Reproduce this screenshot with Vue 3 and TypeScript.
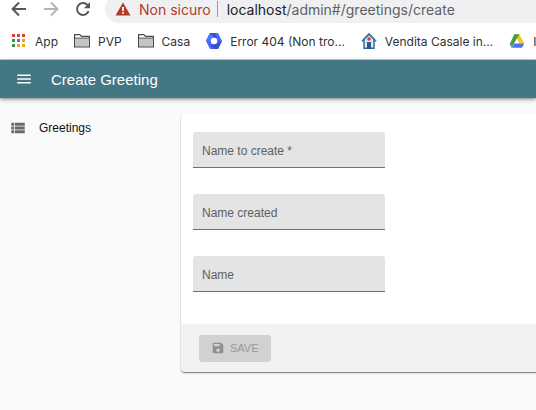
<script setup lang="ts">
import { reactive } from 'vue'

interface Field {
  id: string
  label: string
}

const fields: Field[] = [
  { id: 'nameToCreate', label: 'Name to create *' },
  { id: 'nameCreated', label: 'Name created' },
  { id: 'name', label: 'Name' },
]

const values = reactive<Record<string, string>>({ nameToCreate: '', nameCreated: '', name: '' })

interface Dot {
  x: number
  y: number
  fill: string
}

const dots: Dot[] = ['#d9452f', '#d9452f', '#d9452f', '#3f9150', '#4a6ef0', '#e3a51f', '#3f9150', '#e8ac1d', '#e8ac1d'].map(
  (fill, i) => ({ x: (i % 3) * 5, y: Math.floor(i / 3) * 5 + 1, fill }),
)

interface Bookmark {
  icon: 'apps' | 'folder' | 'hexagon' | 'house' | 'drive'
  title: string
}

const bookmarks: Bookmark[] = [
  { icon: 'apps', title: 'App' },
  { icon: 'folder', title: 'PVP' },
  { icon: 'folder', title: 'Casa' },
  { icon: 'hexagon', title: 'Error 404 (Non tro...' },
  { icon: 'house', title: 'Vendita Casale in...' },
  { icon: 'drive', title: 'I' },
]
</script>

<template>
  <div class="page">
    <div class="toolbar">
      <button class="nav" type="button" aria-label="Back">
        <svg width="16" height="16" viewBox="0 0 16 16" fill="none" stroke="#54575b" stroke-width="2"><path d="M15 8H2M8 1.5 1.6 8 8 14.5" /></svg>
      </button>
      <button class="nav" type="button" aria-label="Forward">
        <svg width="16" height="16" viewBox="0 0 16 16" fill="none" stroke="#b4b5b7" stroke-width="2"><path d="M1 8h13M8 1.5 14.4 8 8 14.5" /></svg>
      </button>
      <button class="nav" type="button" aria-label="Reload">
        <svg width="16" height="16" viewBox="0 0 16 16"><path d="M13.6 10.2A6 6 0 1 1 12.4 3.9L14 5.6" fill="none" stroke="#54575b" stroke-width="2" /><path d="M15 1v6.2H8.8z" fill="#54575b" /></svg>
      </button>
      <div class="address">
        <svg width="16" height="14" viewBox="0 0 16 14"><path d="M8 .5 15.5 13.5H.5z" fill="#b23a27" /><path d="M7.1 5h1.8v4H7.1zM7.1 10h1.8v1.8H7.1z" fill="#fff" /></svg>
        <span class="warning">Non sicuro</span>
        <span class="divider"></span>
        <span class="url"><b>localhost</b>/admin#/greetings/create</span>
      </div>
    </div>

    <nav class="bookmarks">
      <a v-for="b in bookmarks" :key="b.title" href="#" class="bookmark">
        <svg v-if="b.icon === 'apps'" width="15" height="16" viewBox="0 0 15 16">
          <rect v-for="(d, i) in dots" :key="i" :x="d.x" :y="d.y" width="3" height="3" :fill="d.fill" />
        </svg>
        <svg v-else-if="b.icon === 'folder'" width="16" height="16" viewBox="0 0 16 16">
          <path d="M.6 13.9V1.6h5.2l1.8 1.8h7.8v10.5z" fill="#fff" stroke="#4a4a4a" stroke-width="1.2" />
          <path d="M1.2 5.5h13.6v7.8H1.2z" fill="#c4c4c4" />
          <path d="M1 5.1h14" stroke="#4a4a4a" />
        </svg>
        <svg v-else-if="b.icon === 'hexagon'" width="16" height="16" viewBox="0 0 16 16">
          <path d="M4 0h8l4 8-4 8H4L0 8z" fill="#466af5" />
          <path d="M4 0h4l3 4.2L8 5 5 8H0zM16 8l-4 8H7l-2-4 5-1z" fill="#3450cf" />
          <path d="M4 0 0 8h4.8L8 4.4z" fill="#5277fa" />
          <circle cx="8" cy="8" r="3.2" fill="#fff" />
        </svg>
        <svg v-else-if="b.icon === 'house'" width="16" height="16" viewBox="0 0 16 16">
          <path d="M3 6v9.3h10V6L8 1.5z" fill="#dcebf5" stroke="#376493" stroke-width="1.4" />
          <path d="M1 8.3 8 1l7 7.3" fill="none" stroke="#4779a8" stroke-width="1.8" />
          <circle cx="8" cy="6" r="1.8" fill="#d93a30" />
          <path d="M5.8 9h4.4v1H10v6H6v-6h-.2z" fill="#28598c" />
        </svg>
        <svg v-else width="16" height="16" viewBox="0 0 16 16">
          <path d="M5.3 1.3h5l5 9.1h-5z" fill="#f5c52c" />
          <path d="M.7 11 5.3 1.3h5L2.7 14.7z" fill="#42a04b" />
          <path d="M7.9 6.1 10.4 10.4h-5z" fill="#fff" />
          <path d="M5.3 10.4h10l-2.4 4.3H2.8z" fill="#4c70ef" />
        </svg>
        <span>{{ b.title }}</span>
      </a>
    </nav>

    <header class="appbar">
      <button class="menu" type="button" aria-label="Menu">
        <svg width="18" height="18" viewBox="0 0 24 24" fill="#fff"><path d="M3 18h18v-2H3v2zm0-5h18v-2H3v2zm0-7v2h18V6H3z" /></svg>
      </button>
      <h1>Create Greeting</h1>
    </header>

    <div class="content">
      <aside>
        <a href="#" class="menu-item">
          <svg width="18" height="18" viewBox="0 0 24 24" fill="#696969"><path d="M3 14h4v-4H3v4zm0 5h4v-4H3v4zM3 9h4V5H3v4zm5 5h13v-4H8v4zm0 5h13v-4H8v4zM8 5v4h13V5H8z" /></svg>
          <span>Greetings</span>
        </a>
      </aside>
      <form class="card" @submit.prevent>
        <div class="fields">
          <div v-for="f in fields" :key="f.id" class="field">
            <label v-show="!values[f.id]" :for="f.id">{{ f.label }}</label>
            <input :id="f.id" v-model="values[f.id]" type="text" />
          </div>
        </div>
        <footer>
          <button class="save" type="submit" disabled>
            <svg width="14" height="14" viewBox="0 0 24 24" fill="#8f8f8f"><path d="M17 3H5c-1.11 0-2 .9-2 2v14c0 1.1.89 2 2 2h14c1.1 0 2-.9 2-2V7l-4-4zm-5 16c-1.66 0-3-1.34-3-3s1.34-3 3-3 3 1.34 3 3-1.34 3-3 3zm3-10H5V5h10v4z" /></svg>
            <span>SAVE</span>
          </button>
        </footer>
      </form>
    </div>
  </div>
</template>

<style>
body {
  background: #fafafa;
  overflow: hidden;
}
</style>

<style scoped>
.page {
  display: flow-root;
  overflow: hidden;
  font-family: "Liberation Sans", Arial, sans-serif;
  font-size: 12px;
}
button {
  border: 0;
  padding: 0;
  background: none;
  font: inherit;
}
svg {
  display: block;
  flex: none;
}
a {
  color: inherit;
  text-decoration: none;
}
.toolbar {
  display: flex;
  align-items: center;
  gap: 16px;
  height: 28px;
  margin-top: -5px;
  padding-left: 11px;
  background: #fff;
}
.address {
  display: flex;
  flex: 1;
  align-items: center;
  gap: 8px;
  height: 28px;
  margin-left: -2px;
  padding-left: 10px;
  border-radius: 14px 0 0 14px;
  background: #eff0f2;
  font-family: Inter, sans-serif;
  font-size: 14px;
  white-space: nowrap;
}
.warning {
  color: #b23a27;
}
.divider {
  width: 1px;
  height: 16px;
  margin: 0 1px 0 -2px;
  background: #999;
}
.url {
  color: #5f6064;
}
.url b {
  color: #202124;
  font-weight: 400;
}
.bookmarks {
  display: flex;
  align-items: center;
  gap: 16px;
  height: 36px;
  padding-left: 12px;
  border-bottom: 1px solid #d5d7d7;
  background: #fff;
  color: #303236;
  font-family: Inter, sans-serif;
  white-space: nowrap;
}
.bookmark {
  display: flex;
  align-items: center;
  gap: 8px;
}
.appbar {
  position: relative;
  display: flex;
  align-items: center;
  gap: 18px;
  height: 38px;
  padding-left: 15px;
  background: #437783;
  color: #fff;
  box-shadow: 0 1px 3px rgba(0, 0, 0, 0.4), 0 2px 6px rgba(0, 0, 0, 0.14);
}
h1 {
  margin: 0;
  font-size: 15px;
  font-weight: 400;
}
.content {
  display: flex;
  padding: 16px 0;
}
aside {
  width: 181px;
  flex: none;
}
.menu-item {
  display: flex;
  align-items: center;
  gap: 12px;
  padding: 5px 9px;
  color: #111;
}
.card {
  flex: 1;
  border-radius: 4px 0 0 4px;
  background: #fff;
  box-shadow: 0 1px 1px rgba(0, 0, 0, 0.4), 0 1px 2px rgba(0, 0, 0, 0.2);
}
.fields {
  display: grid;
  gap: 26px;
  padding: 18px 12px 32px;
}
.field {
  position: relative;
  width: 192px;
  height: 36px;
}
.field label {
  position: absolute;
  left: 9px;
  top: 11px;
  line-height: 16px;
  color: #606060;
  pointer-events: none;
}
.field input {
  box-sizing: border-box;
  width: 100%;
  height: 100%;
  padding: 0 9px;
  border: 0;
  border-bottom: 1px solid #707070;
  border-radius: 3px 3px 0 0;
  outline: 0;
  background: #e4e4e4;
  font: inherit;
}
footer {
  display: flex;
  align-items: center;
  height: 48px;
  padding-left: 18px;
  border-radius: 0 0 0 4px;
  background: #f2f2f2;
}
.save {
  display: flex;
  align-items: center;
  gap: 5px;
  height: 27px;
  padding: 0 12px;
  border-radius: 3px;
  background: #d1d1d1;
  color: #999;
  font-size: 11px;
}
</style>
